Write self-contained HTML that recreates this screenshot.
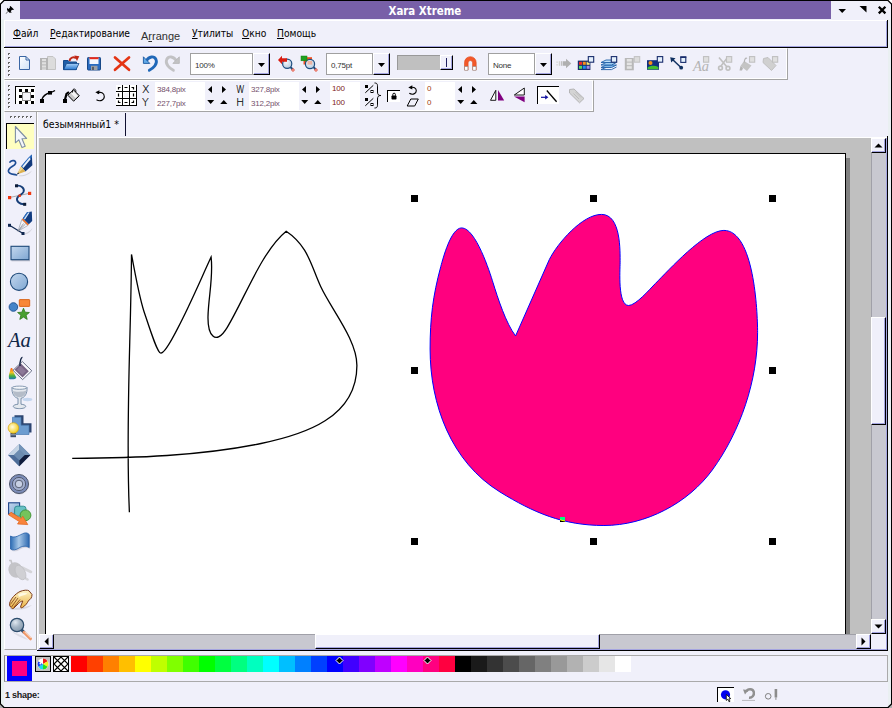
<!DOCTYPE html>
<html><head><meta charset="utf-8"><title>Xara Xtreme</title>
<style>
html,body{margin:0;padding:0;}
body{width:892px;height:708px;overflow:hidden;position:relative;background:#f0f0fa;font-family:"DejaVu Sans","Liberation Sans",sans-serif;font-size:10px;color:#000;}
div,span.p,i,svg.p{position:absolute;box-sizing:border-box;display:block}
#title{left:20px;top:1px;width:811px;height:18px;background:#7860a8;}
#ttext{left:388.5px;top:2px;color:#fff;font-weight:bold;font-family:"DejaVu Sans Condensed","DejaVu Sans",sans-serif;font-size:11.4px;line-height:18px;height:18px;white-space:nowrap}
.mi{top:28px;font-family:"DejaVu Sans Condensed","DejaVu Sans",sans-serif;font-size:10.2px;line-height:12px;white-space:nowrap;}
#cells i{top:656px;width:16px;height:16px;}
.gd{width:2px;height:2px;background:#fff;border-left:1px solid #666;border-top:1px solid #666;}
.cb{background:#fff;border:1px solid #a0a0a0;}
.btn{background:#f0f0fa;border:1px solid;border-color:#fff #000 #000 #fff;box-shadow:inset -1px -1px 0 #a4a4e0}
.tri{width:0;height:0;border:4px solid transparent;border-top:4px solid #000;border-bottom:none}
.ft{font-family:"Liberation Sans",sans-serif;font-size:8px;line-height:10px;white-space:nowrap;letter-spacing:-0.2px}
.lb{font-family:"DejaVu Sans Light","DejaVu Sans",sans-serif;font-weight:200;font-size:11px;line-height:11px;white-space:nowrap;color:#000;-webkit-text-stroke:0.2px #000}
.wf{background:#fff}
.pressed{background:#fff;border-left:1px solid #000;border-top:1px solid #000}
</style></head><body>
<!-- left strip -->
<div style="left:1px;top:19px;width:3px;height:687px;background:#e8f0f0"></div>
<!-- TITLE -->
<div id="title"></div>
<div id="ttext">Xara Xtreme</div>
<!-- MENUBAR -->
<div style="left:4px;top:20px;width:883px;height:27px;border-left:1px solid #fff;border-top:1px solid #fff"></div>
<div class="mi" style="left:13px"><u>Ф</u>айл</div>
<div class="mi" style="left:50px"><u>Р</u>едактирование</div>
<div class="mi" style="left:141px;font-family:'Liberation Sans',sans-serif;top:30px;font-size:11px;color:#303030">A<u>r</u>range</div>
<div class="mi" style="left:192px"><u>У</u>тилиты</div>
<div class="mi" style="left:242px"><u>О</u>кно</div>
<div class="mi" style="left:277px"><u>П</u>омощь</div>
<div style="left:5px;top:46px;width:882px;height:1px;background:#a4a4e0"></div>
<div style="left:4px;top:47px;width:884px;height:1px;background:#000"></div>
<div style="left:886px;top:21px;width:1px;height:26px;background:#a4a4e0"></div>
<div style="left:887px;top:20px;width:1px;height:28px;background:#000"></div>
<!-- TOOLBAR 1 -->
<div style="left:4px;top:48px;width:784px;height:32px;border-right:1px solid #a4a4a4;border-bottom:1px solid #a4a4a4;border-left:1px solid #fff;border-top:1px solid #fff;box-shadow:inset -1px -1px 0 #fff"></div>
<div class="gd" style="left:8px;top:53px"></div><div class="gd" style="left:8px;top:57px"></div><div class="gd" style="left:8px;top:62px"></div><div class="gd" style="left:8px;top:66px"></div><div class="gd" style="left:8px;top:70px"></div><div class="gd" style="left:8px;top:74px"></div>
<div class="cb" style="left:190px;top:53px;width:63px;height:22px"></div><div class="btn" style="left:253px;top:53px;width:17px;height:22px"></div><svg class="p" style="left:258px;top:63px" width="7" height="4"><path d="M0 0H7L3.5 4Z"/></svg><div class="ft" style="left:195px;top:61px;color:#333">100%</div><div class="cb" style="left:326px;top:53px;width:47px;height:22px"></div><div class="btn" style="left:373px;top:53px;width:17px;height:22px"></div><svg class="p" style="left:378px;top:63px" width="7" height="4"><path d="M0 0H7L3.5 4Z"/></svg><div class="ft" style="left:331px;top:61px;color:#333">0,75pt</div><div class="cb" style="left:488px;top:53px;width:47px;height:22px"></div><div class="btn" style="left:535px;top:53px;width:17px;height:22px"></div><svg class="p" style="left:540px;top:63px" width="7" height="4"><path d="M0 0H7L3.5 4Z"/></svg><div class="ft" style="left:493px;top:61px;color:#333">None</div>
<div style="left:397px;top:55px;width:44px;height:15px;background:#c0c0c0;border-top:1px solid #999;border-left:1px solid #999"></div>
<div class="btn" style="left:440px;top:55px;width:13px;height:15px"></div>
<div style="left:446px;top:58px;width:1px;height:9px;background:#202060"></div>
<!-- TOOLBAR 2 -->
<div style="left:4px;top:80px;width:590px;height:32px;border-right:1px solid #a4a4a4;border-bottom:1px solid #a4a4a4;border-left:1px solid #fff;border-top:1px solid #fff;box-shadow:inset -1px -1px 0 #fff"></div>
<div class="gd" style="left:8px;top:85px"></div><div class="gd" style="left:8px;top:89px"></div><div class="gd" style="left:8px;top:94px"></div><div class="gd" style="left:8px;top:98px"></div><div class="gd" style="left:8px;top:102px"></div><div class="gd" style="left:8px;top:106px"></div>
<div class="pressed" style="left:15px;top:86px;width:20px;height:18px"></div>
<div class="wf" style="left:116px;top:85px;width:21px;height:21px"></div>
<div class="lb" style="left:142px;top:84px">X</div>
<div class="lb" style="left:142px;top:97px">Y</div>
<div class="wf" style="left:155px;top:82px;width:50px;height:28px"></div>
<div class="ft" style="left:157px;top:85px;color:#74506c">384,8pix</div>
<div class="ft" style="left:157px;top:99px;color:#74506c">227,7pix</div>
<div class="lb" style="left:235.5px;top:84px;transform:scaleX(0.8);transform-origin:0 0">W</div>
<div class="lb" style="left:236px;top:97px">H</div>
<div class="wf" style="left:249px;top:82px;width:50px;height:28px"></div>
<div class="ft" style="left:251px;top:85px;color:#74506c">327,8pix</div>
<div class="ft" style="left:251px;top:99px;color:#74506c">312,2pix</div>
<div class="wf" style="left:330px;top:82px;width:30px;height:28px"></div>
<div class="ft" style="left:332px;top:84px;color:#801818">100</div>
<div class="ft" style="left:332px;top:98px;color:#801818">100</div>
<div class="pressed" style="left:387px;top:90px;width:13px;height:12px"></div>
<div class="wf" style="left:425px;top:82px;width:30px;height:28px"></div>
<div class="ft" style="left:427px;top:84px;color:#a04010">0</div>
<div class="ft" style="left:427px;top:98px;color:#a04010">0</div>
<div class="pressed" style="left:537px;top:86px;width:22px;height:18px"></div>
<!-- TOOLBOX -->
<div style="left:4px;top:112px;width:33px;height:538px;border-right:1px solid #a8a8a8;border-bottom:1px solid #a8a8a8;border-left:1px solid #fff"></div>
<div class="gd" style="left:10px;top:116px"></div><div class="gd" style="left:14px;top:116px"></div><div class="gd" style="left:18px;top:116px"></div><div class="gd" style="left:22px;top:116px"></div><div class="gd" style="left:26px;top:116px"></div><div class="gd" style="left:30px;top:116px"></div>
<div style="left:6px;top:123px;width:28px;height:26px;background:#ffffc0;border-left:1px solid #000;border-top:1px solid #000"></div>
<!-- TAB -->
<div style="left:37px;top:112px;width:1px;height:538px;background:#fff"></div>
<div style="left:43px;top:118px;font-family:'DejaVu Sans Condensed','DejaVu Sans',sans-serif;font-size:10.4px;line-height:12px;white-space:nowrap">безымянный1 *</div>
<div style="left:125px;top:113px;width:1px;height:23px;background:#101030"></div>
<!-- CANVAS -->
<div style="left:38px;top:137px;width:849px;height:1px;background:#fff"></div>
<div style="left:39px;top:138px;width:832px;height:496px;background:#c0c0c0"></div>
<div style="left:50px;top:158px;width:800px;height:476px;background:#808080"></div>
<div style="left:45px;top:153px;width:801px;height:481px;background:#fff;border:1px solid #000;border-bottom:none"></div>
<!-- SCROLLBARS -->
<div style="left:871px;top:138px;width:15px;height:496px;background:#c8c8d0;border-left:1px solid #a0a0a8"></div>
<div class="btn" style="left:871px;top:138px;width:15px;height:15px"></div>
<div class="btn" style="left:871px;top:619px;width:15px;height:15px"></div>
<div class="btn" style="left:871px;top:317px;width:15px;height:108px"></div>
<div style="left:39px;top:634px;width:832px;height:15px;background:#c8c8d0;border-top:1px solid #a0a0a8"></div>
<div class="btn" style="left:39px;top:634px;width:15px;height:15px"></div>
<div class="btn" style="left:856px;top:634px;width:15px;height:15px"></div>
<div class="btn" style="left:315px;top:634px;width:285px;height:15px"></div>
<div style="left:38px;top:649px;width:849px;height:1px;background:#a4a4e0"></div>
<div style="left:37px;top:650px;width:851px;height:1px;background:#000"></div>
<div style="left:886px;top:138px;width:1px;height:512px;background:#a4a4e0"></div>
<div style="left:887px;top:136px;width:1px;height:515px;background:#000"></div>
<div style="left:888px;top:19px;width:3px;height:687px;background:#eaf0f2"></div>
<!-- COLOUR BAR -->
<div style="left:4px;top:655px;width:884px;height:27px;border:1px solid #aaa;border-left-color:#888"></div>
<div style="left:7px;top:656px;width:25px;height:25px;background:#0000ff"></div>
<div style="left:12px;top:661px;width:15px;height:15px;background:#ff007f"></div>
<div style="left:35px;top:656px;width:16px;height:16px;background:#c0c0c0;border:1px solid #000"></div>
<div style="left:53px;top:656px;width:16px;height:16px;background:#fff;border:1px solid #000"></div>
<div id="cells"><i style="left:71px;background:rgb(255,0,0)"></i><i style="left:87px;background:rgb(255,64,0)"></i><i style="left:103px;background:rgb(255,128,0)"></i><i style="left:119px;background:rgb(255,191,0)"></i><i style="left:135px;background:rgb(255,255,0)"></i><i style="left:151px;background:rgb(191,255,0)"></i><i style="left:167px;background:rgb(128,255,0)"></i><i style="left:183px;background:rgb(64,255,0)"></i><i style="left:199px;background:rgb(0,255,0)"></i><i style="left:215px;background:rgb(0,255,64)"></i><i style="left:231px;background:rgb(0,255,128)"></i><i style="left:247px;background:rgb(0,255,191)"></i><i style="left:263px;background:rgb(0,255,255)"></i><i style="left:279px;background:rgb(0,191,255)"></i><i style="left:295px;background:rgb(0,128,255)"></i><i style="left:311px;background:rgb(0,64,255)"></i><i style="left:327px;background:rgb(0,0,255)"></i><i style="left:343px;background:rgb(64,0,255)"></i><i style="left:359px;background:rgb(128,0,255)"></i><i style="left:375px;background:rgb(191,0,255)"></i><i style="left:391px;background:rgb(255,0,255)"></i><i style="left:407px;background:rgb(255,0,191)"></i><i style="left:423px;background:rgb(255,0,128)"></i><i style="left:439px;background:rgb(255,0,64)"></i><i style="left:455px;background:rgb(0,0,0)"></i><i style="left:471px;background:rgb(26,26,26)"></i><i style="left:487px;background:rgb(51,51,51)"></i><i style="left:503px;background:rgb(76,76,76)"></i><i style="left:519px;background:rgb(102,102,102)"></i><i style="left:535px;background:rgb(128,128,128)"></i><i style="left:551px;background:rgb(153,153,153)"></i><i style="left:567px;background:rgb(178,178,178)"></i><i style="left:583px;background:rgb(204,204,204)"></i><i style="left:599px;background:rgb(230,230,230)"></i><i style="left:615px;background:rgb(255,255,255)"></i></div>
<!-- STATUS -->
<div style="left:5px;top:689px;font-size:9px;font-weight:bold;letter-spacing:-0.25px;line-height:12px;font-family:'Liberation Sans',sans-serif;white-space:nowrap;color:#181818">1 shape:</div>
<div class="pressed" style="left:717px;top:687px;width:17px;height:15px"></div>
<!-- DRAWING + ICONS -->
<svg class="p" style="left:0;top:0" width="892" height="708" viewBox="0 0 892 708">
<path d="M72.2 458.4 C133.4 458.0 200.9 456.0 261.0 443.5 C304.0 434.6 356.9 417.9 356.9 365.4 C356.9 339.7 331.1 309.1 320.8 286.8 C311.0 265.6 308.2 245.9 286.2 231.2 C261.8 251.0 244.1 299.7 227.1 327.6 C215.1 347.3 207.7 334.2 208.0 316.6 C208.3 298.0 213.5 276.6 211.1 257.1 C200.1 280.9 190.1 304.8 177.8 328.1 C172.5 338.5 165 353.2 160.8 353.2 C157.5 353.2 150.5 331 143.9 311.2 C139.5 298 134 268 131.5 254.4 C130.9 340.2 125.4 426.6 129.4 512.3" fill="none" stroke="#000" stroke-width="1.3"/>
<path d="M515.6 335.9 L549.3 259.6 C557.2 243.6 582.2 214.4 601.5 214.4 C621.1 214.4 620.1 250.8 620.1 262.8 C620.1 269.3 617.5 305.5 628.6 305.5 C635.8 305.5 650.3 288.6 655.2 283.7 C669.1 269.8 704.6 230.4 723.9 230.4 C753.9 230.4 757.6 310.7 757.6 332.6 C757.6 380.5 740.4 431.4 712.3 470.0 C688.1 503.2 645.6 525.5 603.9 525.5 C563.3 525.5 533.5 512.6 500.0 492.0 C450.9 461.8 430.1 404.4 430.1 349.0 C430.1 318.6 432.8 296.0 440.8 266.5 C443.0 258.5 450.9 227.9 461.7 227.9 C475.7 227.9 489.9 272.5 493.0 282.6 C497.7 297.8 506.1 323.8 515.6 335.9 Z" fill="#ff007f" stroke="#0000ff" stroke-width="1"/>
<g fill="#000">
<rect x="411" y="195" width="7" height="7"/><rect x="590" y="195" width="7" height="7"/><rect x="769" y="195" width="7" height="7"/>
<rect x="411" y="367" width="7" height="7"/><rect x="769" y="367" width="7" height="7"/>
<rect x="411" y="538" width="7" height="7"/><rect x="590" y="538" width="7" height="7"/><rect x="769" y="538" width="7" height="7"/>
</g>
<clipPath id="mk"><rect x="560" y="517" width="5" height="5"/></clipPath>
<rect x="560" y="517" width="5" height="5" fill="#000"/>
<path clip-path="url(#mk)" d="M515.6 335.9 L549.3 259.6 C557.2 243.6 582.2 214.4 601.5 214.4 C621.1 214.4 620.1 250.8 620.1 262.8 C620.1 269.3 617.5 305.5 628.6 305.5 C635.8 305.5 650.3 288.6 655.2 283.7 C669.1 269.8 704.6 230.4 723.9 230.4 C753.9 230.4 757.6 310.7 757.6 332.6 C757.6 380.5 740.4 431.4 712.3 470.0 C688.1 503.2 645.6 525.5 603.9 525.5 C563.3 525.5 533.5 512.6 500.0 492.0 C450.9 461.8 430.1 404.4 430.1 349.0 C430.1 318.6 432.8 296.0 440.8 266.5 C443.0 258.5 450.9 227.9 461.7 227.9 C475.7 227.9 489.9 272.5 493.0 282.6 C497.7 297.8 506.1 323.8 515.6 335.9 Z" fill="#00ff80" stroke="#ffff00" stroke-width="1"/>
<defs>
<linearGradient id="gPage" x1="0" y1="0" x2="1" y2="1"><stop offset="0" stop-color="#fff"/><stop offset="1" stop-color="#cfe2f6"/></linearGradient>
<linearGradient id="gBlue" x1="0" y1="0" x2="1" y2="1"><stop offset="0" stop-color="#c4d8ee"/><stop offset="1" stop-color="#7ea6d2"/></linearGradient>
<linearGradient id="gFold" x1="0" y1="0" x2="0" y2="1"><stop offset="0" stop-color="#a8d0f8"/><stop offset="1" stop-color="#2878d0"/></linearGradient>
<radialGradient id="gLens" cx="0.4" cy="0.35" r="0.7"><stop offset="0" stop-color="#f4f8fc"/><stop offset="1" stop-color="#b4c8dc"/></radialGradient>
<radialGradient id="gBulb" cx="0.4" cy="0.4" r="0.6"><stop offset="0" stop-color="#fffbe0"/><stop offset="1" stop-color="#f4d020"/></radialGradient>
<linearGradient id="gFlag" x1="0" y1="0" x2="1" y2="0"><stop offset="0" stop-color="#2c6cb4"/><stop offset="0.45" stop-color="#a8c8e8"/><stop offset="1" stop-color="#2c68b0"/></linearGradient>
<linearGradient id="gSpill" x1="0" y1="0" x2="0" y2="1"><stop offset="0" stop-color="#f86020"/><stop offset="0.4" stop-color="#f0c020"/><stop offset="0.7" stop-color="#40b040"/><stop offset="1" stop-color="#2070c0"/></linearGradient>
<linearGradient id="gHand" x1="0" y1="0" x2="0" y2="1"><stop offset="0" stop-color="#fff4c8"/><stop offset="1" stop-color="#e8b040"/></linearGradient>
</defs>
<!-- title icons -->
<path d="M10.5 6 L14 9.5 L13 10 L12 9.7 L10.7 11.2 L11.8 12.5 L9.5 12.7 L8.3 11.5 L6 13.8 L5.7 13.5 L8 11.2 L7 10 L7.2 7.8 L8.5 9 L10 7.5 L9.8 6.5Z" fill="#000"/>
<path d="M838.5 9H846L842.2 13Z M859.5 6H866.5V12.5Z" fill="#000"/>
<path d="M878.8 6.8L885.4 13.4M885.4 6.8L878.8 13.4" stroke="#000" stroke-width="2.3"/>
<!-- TB1: new -->
<path d="M19.5 56.5H26L29.5 60V69.5H19.5Z" fill="url(#gPage)" stroke="#3a66a4"/>
<path d="M26 56.5V60H29.5" fill="none" stroke="#3a66a4"/>
<!-- gray film+page -->
<path d="M47.5 56.5H53L55.5 59V69.5H47.5Z" fill="#dcdcdc" stroke="#c4c4c4"/>
<rect x="40" y="58" width="8" height="12" fill="#b4b4b4"/>
<g fill="#e0e0e0"><rect x="42" y="59" width="4" height="2.2"/><rect x="42" y="62.2" width="4" height="2.2"/><rect x="42" y="65.4" width="4" height="2.2"/><rect x="42" y="68.4" width="4" height="1.4"/></g>
<!-- open -->
<path d="M63.5 60.5H68L69.5 62H76.5V69.5H63.5Z" fill="#1f5ea8" stroke="#174a8a"/>
<path d="M66.5 63.5H79L76 69.7H63.6Z" fill="url(#gFold)" stroke="#174a8a" stroke-width="0.8"/>
<path d="M69.5 61C70 57.5 73.5 56.5 76 58.2" fill="none" stroke="#c02818" stroke-width="2"/>
<path d="M74.3 55.6L79.3 56.2L77 61Z" fill="#c02818"/>
<!-- save -->
<rect x="87.5" y="57.5" width="13" height="12.5" rx="0.8" fill="#2a6cc0" stroke="#184888"/>
<rect x="89.5" y="57.5" width="9" height="6.5" fill="#f4f8ff"/>
<rect x="89.5" y="57.2" width="9" height="2" fill="#e82818"/>
<rect x="91" y="65.8" width="6.5" height="4.2" fill="#9aa0a8"/><rect x="92" y="66.8" width="2" height="3.2" fill="#585e68"/>
<!-- X -->
<path d="M115 57.5L129 69.8M129 57.5L115 69.8" stroke="#e43414" stroke-width="2.7" stroke-linecap="round"/>
<!-- undo -->
<path d="M146.5 60.5C149 56.5 154 55.5 156 59.5C158 64 153 68.5 149.3 70.3" fill="none" stroke="#2068b8" stroke-width="2.8" stroke-linecap="round"/>
<path d="M143.4 56.8V63.4H149.8Z" fill="#62aae8" stroke="#1a58a0" stroke-width="0.9"/>
<!-- redo -->
<path d="M176.2 60.5C173.7 56.5 168.7 55.5 166.7 59.5C164.7 64 169.7 68.5 173.4 70.3" fill="none" stroke="#c2c2c4" stroke-width="2.8" stroke-linecap="round"/>
<path d="M179.3 56.8V63.4H172.9Z" fill="#c2c2c4" stroke="#b8b8ba" stroke-width="0.9"/>
<!-- zoom prev -->
<path d="M290.5 67L293 69.8" stroke="#1e4e80" stroke-width="2"/><circle cx="293" cy="70" r="1.2" fill="#fff" stroke="#e03820" stroke-width="0.9"/>
<circle cx="287.2" cy="63.8" r="4.6" fill="url(#gLens)" stroke="#1e4e80" stroke-width="1.2"/>
<path d="M278 60L282 55.8V58.2H287V61.8H282V64.2Z" fill="#d81c10"/>
<!-- zoom drawing -->
<rect x="303.5" y="57.2" width="8.5" height="7.3" fill="#f05020"/>
<path d="M313.5 67L316 69.8" stroke="#1e4e80" stroke-width="2"/><circle cx="316" cy="70" r="1.2" fill="#fff" stroke="#e03820" stroke-width="0.9"/>
<circle cx="310" cy="64" r="4.6" fill="url(#gLens)" stroke="#1e4e80" stroke-width="1.2"/>
<rect x="307.5" y="61" width="4.7" height="3.6" fill="#f0a088" opacity="0.75"/>
<rect x="301" y="56" width="6" height="4.8" fill="#20a020" stroke="#108010" stroke-width="0.5"/>
<!-- magnet -->
<path d="M464.5 70V62.5A5.8 5.8 0 0 1 476.2 62.5V70H472.6V62.8A2.2 2.2 0 0 0 468.1 62.8V70Z" fill="#f2582a" stroke="#e04818" stroke-width="0.6"/>
<rect x="464.7" y="66.6" width="3.2" height="3.6" fill="#fff" stroke="#909090" stroke-width="0.6"/><rect x="472.8" y="66.6" width="3.2" height="3.6" fill="#fff" stroke="#909090" stroke-width="0.6"/>
<!-- gray arrow -->
<path d="M563 61.2H566V58.8L571.3 63.5L566 68.2V65.8H563Z" fill="#b0b0b0"/>
<g fill="#dcdcdc"><rect x="556.3" y="61.4" width="1.6" height="1.6"/><rect x="556.3" y="64" width="1.6" height="1.6"/><rect x="558.8" y="61.2" width="1.5" height="4.6" fill="#d0d0d0"/><rect x="561" y="61.2" width="1.5" height="4.6" fill="#c0c0c0"/></g>
<!-- colour gallery -->
<rect x="577.8" y="60.6" width="12.6" height="9.4" fill="#182c6c"/>
<rect x="579" y="61.8" width="3" height="3" fill="#f02828"/><rect x="582.8" y="61.8" width="3" height="3" fill="#f89018"/><rect x="586.6" y="61.8" width="3" height="3" fill="#f8e878"/>
<rect x="579" y="65.8" width="3" height="3" fill="#58d858"/><rect x="582.8" y="65.8" width="3" height="3" fill="#1890f0"/><rect x="586.6" y="65.8" width="3" height="3" fill="#a088e8"/>
<rect x="588.3" y="56.6" width="5.4" height="5.6" fill="#e4f0fc" stroke="#182c6c" stroke-width="1.1"/>
<!-- layer gallery -->
<g stroke="#2060a8" stroke-width="0.9"><path d="M601 67.5L606 65H616.5L611.5 67.5Z" fill="#80b8e8"/><path d="M601 65L606 62.5H616.5L611.5 65Z" fill="#a0ccf0"/><path d="M601 62.5L606 60H616.5L611.5 62.5Z" fill="#c0e0f8"/><path d="M601 69.5L606 67.5" fill="none"/></g>
<path d="M601 69.6H611.5L616.5 67" fill="none" stroke="#2060a8" stroke-width="0.9"/>
<rect x="611.3" y="56.6" width="5.4" height="5.6" fill="#e4f0fc" stroke="#182c6c" stroke-width="1.1"/>
<!-- frame gallery gray -->
<rect x="624.8" y="58" width="9" height="12.3" fill="#b8b8b8"/>
<g fill="#e4e4e4"><rect x="626.8" y="59" width="5" height="2.6"/><rect x="626.8" y="62.6" width="5" height="2.6"/><rect x="626.8" y="66.2" width="5" height="2.6"/></g>
<rect x="634.3" y="56.6" width="5.4" height="5.6" fill="#dcdcdc" stroke="#c4c4c4" stroke-width="1.1"/>
<!-- bitmap gallery -->
<rect x="647" y="60.2" width="12" height="9.6" fill="#103080"/>
<circle cx="650.5" cy="63" r="2" fill="#f89018"/>
<path d="M647.6 69.3V67.5C650 65.5 655 65.3 658.4 67V69.3Z" fill="#40c030"/>
<rect x="657.3" y="56.6" width="5.4" height="5.6" fill="#e4f0fc" stroke="#182c6c" stroke-width="1.1"/>
<!-- line gallery -->
<path d="M672 59L681 67.5" stroke="#103060" stroke-width="1.5"/><circle cx="681.2" cy="67.7" r="1.9" fill="#103060"/>
<path d="M670.2 57.2L675.5 58.2L671.2 62.5Z" fill="#103060"/>
<rect x="680.8" y="57" width="5" height="5.4" fill="#e4f0fc" stroke="#182c6c" stroke-width="1.1"/><rect x="680.3" y="56.4" width="6" height="1.6" fill="#182c6c"/>
<!-- font gallery gray -->
<text x="693" y="70.5" font-family="Liberation Serif,serif" font-style="italic" font-size="14.5" fill="#b4b4b4">Aa</text>
<rect x="703.5" y="56.6" width="5.2" height="5.6" fill="#e0e0e0" stroke="#c0c0c0" stroke-width="1.1"/>
<!-- clipart gallery gray (scissors) -->
<g stroke="#c0c0c0" fill="none" stroke-width="1.6"><path d="M719 57.5L727 67M727.5 57.5L721 66"/><circle cx="720.5" cy="68" r="1.9"/><circle cx="728" cy="68.3" r="1.9"/></g>
<rect x="726.5" y="56.6" width="5.2" height="5.6" fill="#e0e0e0" stroke="#c0c0c0" stroke-width="1.1"/>
<!-- fill gallery gray (bucket) -->
<path d="M744 61L751.5 65.5L747 71L740.5 66Z" fill="#c4c4c4"/><path d="M740.5 66L739.5 70.5H742L743 68Z" fill="#b4b4b4"/><path d="M744.5 62.5C744 59 746 57.5 747 58.5" stroke="#b4b4b4" fill="none" stroke-width="1.2"/>
<rect x="749.5" y="56.6" width="5.2" height="5.6" fill="#e0e0e0" stroke="#c0c0c0" stroke-width="1.1"/>
<!-- name gallery gray (tag) -->
<path d="M763.5 58.5L768 57.5L776 65.5L771.5 70.5L763 62.5Z" fill="#d0d0d0" stroke="#bcbcbc" stroke-width="0.9"/>
<rect x="772.5" y="56.6" width="5.2" height="5.6" fill="#e0e0e0" stroke="#c0c0c0" stroke-width="1.1"/>
<!-- ===== TB2 ===== -->
<!-- bounds handles button -->
<g fill="#000"><rect x="19" y="89" width="3" height="3"/><rect x="25" y="89" width="3" height="3"/><rect x="31" y="89" width="3" height="3"/>
<rect x="19" y="95" width="3" height="3"/><rect x="31" y="95" width="3" height="3"/>
<rect x="19" y="101" width="3" height="3"/><rect x="25" y="101" width="3" height="3"/><rect x="31" y="101" width="3" height="3"/></g>
<rect x="22.5" y="92.5" width="8" height="8" fill="#f4f4f8" stroke="#888" stroke-width="1"/>
<!-- object handles -->
<rect x="40" y="99" width="4" height="4" fill="#000"/><rect x="48" y="91" width="4" height="3.6" fill="#000"/>
<path d="M42 99C43.5 96 46 93.8 49 93C51.5 92.3 53.5 91.6 55 90.5" fill="none" stroke="#000" stroke-width="1.4"/>
<!-- fill handles -->
<rect x="63" y="99" width="4" height="4" fill="#000"/>
<path d="M65 99.5L66.5 94L69 92" fill="none" stroke="#000" stroke-width="2.2"/>
<path d="M73.5 89.8L79.3 95.8L73.6 101.2L67.8 95.2Z" fill="#c8c8c8" stroke="#000" stroke-width="1"/>
<path d="M73.5 91.2L77.8 95.7L75.5 98L71 93.5Z" fill="#fff" opacity="0.8"/>
<path d="M72.5 92.5C71.5 88.5 76.5 87.5 75.8 92" fill="none" stroke="#000" stroke-width="0.9"/>
<!-- rotate -->
<path d="M97.5 93.2C100.5 91.2 104.3 93 104.3 96.6C104.3 100.2 100 102 96.5 99.8" fill="none" stroke="#000" stroke-width="1.1"/>
<path d="M95.3 92.2L99.5 90.2L99 94.2Z" fill="#000"/>
<!-- grid icon -->
<g stroke="#000" stroke-width="1" fill="none">
<path d="M116 91.5H137M116 98.5H137M116 105.5H137M122.5 85V106M129.5 85V106M136.5 85V106"/>
<path d="M118.5 89.5V87.5H120.5M124.5 87.5H127.5M131.5 87.5H133.5V89.5M118.5 93.5V96.5M133.5 93.5V96.5M118.5 100.5V102.5H120.5M124.5 102.5H127.5M131.5 102.5H133.5V100.5" stroke-width="1.2"/>
</g>
<rect x="124" y="93" width="4.5" height="4.5" fill="#f0f0f4"/>
<!-- nudge arrows -->
<g fill="#000">
<path d="M212 86V93L208 89.5Z M222 86V93L226 89.5Z M207.2 100H214.2L210.7 104Z M220.2 104H227.4L223.8 100Z"/>
<path d="M306 86V93L302 89.5Z M316 86V93L320 89.5Z M301.2 100H308.2L304.7 104Z M314.2 104H321.4L317.8 100Z"/>
<path d="M462 86V93L458 89.5Z M472 86V93L476 89.5Z M457.2 100H464.2L460.7 104Z M470.2 104H477.4L473.8 100Z"/>
</g>
<!-- percent + brace -->
<g stroke="#000" stroke-width="1" fill="none">
<path d="M373.3 85.3L365.3 92.8M373.3 98.3L365.3 105.8"/>
<rect x="365.5" y="85.5" width="2" height="2" fill="#000"/><rect x="371" y="90.5" width="2" height="2"/>
<rect x="365.5" y="98.5" width="2" height="2" fill="#000"/><rect x="371" y="103.5" width="2" height="2"/>
<path d="M374.5 83C377.5 83 377.5 84.5 377.5 87V92C377.5 94.5 378.5 95.5 380.8 95.5C378.5 95.5 377.5 96.5 377.5 99V104C377.5 106.5 377.5 108 374.5 108"/>
</g>
<!-- lock -->
<rect x="391.5" y="95.5" width="5" height="4" rx="0.8" fill="#000"/><path d="M392.8 95.8V94.5A1.3 1.3 0 0 1 395.4 94.5V95.8" fill="none" stroke="#000" stroke-width="1"/>
<!-- rotate small -->
<path d="M410.5 87.8C413.5 86.3 416.3 88 416.3 90.8C416.3 93.8 412.5 95.2 409.3 93.3" fill="none" stroke="#000" stroke-width="1.1"/>
<path d="M408.3 87.6L412.3 85.2V89.6Z" fill="#000"/>
<!-- skew -->
<path d="M410.8 99H418.3L414.7 106H407.2Z" fill="none" stroke="#000" stroke-width="1"/>
<!-- flip h -->
<path d="M495.8 90.3V100.3H490.5Z" fill="#fff" stroke="#000" stroke-width="0.9"/><path d="M498 90V100.5H504.2Z" fill="#800080"/>
<!-- flip v -->
<path d="M524.3 88V95H514.3Z" fill="#fff" stroke="#000" stroke-width="0.9"/><path d="M524.6 96.5V102.2L514 96.5Z" fill="#800080"/>
<!-- scale line widths button -->
<path d="M546.8 90.5L556.6 101.8" stroke="#000" stroke-width="1.3"/>
<path d="M541 97.3H546" stroke="#1010a0" stroke-width="1.2"/><path d="M545.2 95L548.4 97.3L545.2 99.6Z" fill="#1010a0"/>
<!-- tag gray -->
<path d="M569.5 89.5L574 89L584 98.5L579.5 102.8L569.5 93Z" fill="#d4d4d4" stroke="#b0b0b0" stroke-width="0.9"/>
<path d="M573.5 93.5L579 99M575.5 92L581 97.5" stroke="#b8b8b8" stroke-width="0.8"/>
<!-- ===== STATUS ===== -->
<circle cx="725.5" cy="694.8" r="4.6" fill="#0000f0"/>
<path d="M726.3 694.5V700.5L727.8 699.2L729 701.8L730 701.3L728.9 698.8L730.8 698.6Z" fill="#fff" stroke="#000" stroke-width="0.8"/>
<path d="M746.5 691.5C747.5 688.5 753 688.3 753.8 692C754.5 695.5 752 698 749 697.8" fill="none" stroke="#909090" stroke-width="2.5"/>
<path d="M743 689.5L748.5 690L745 694.5Z" fill="#909090"/>
<path d="M742.5 700.4H755" stroke="#808080" stroke-width="1" stroke-dasharray="1 1"/>
<circle cx="768.2" cy="696.3" r="2.8" fill="none" stroke="#808080" stroke-width="1"/>
<rect x="774.6" y="689" width="2.6" height="8.5" fill="#8c8c8c"/><rect x="775.4" y="697.5" width="1" height="2.4" fill="#8c8c8c"/>
<!-- scrollbar arrows -->
<path d="M874.5 147.5H882.5L878.5 143.5Z M874.5 624.5H882.5L878.5 628.5Z M48.5 637.5V645.5L44.5 641.5Z M861.5 637.5V645.5L865.5 641.5Z" fill="#000"/>
<!-- colour markers -->
<g fill="#000" stroke="#fff" stroke-width="1"><path d="M339.5 657L343 660.5L339.5 664L336 660.5Z M427.5 657L431 660.5L427.5 664L424 660.5Z"/></g>
<!-- colour wheel -->
<g transform="translate(43 664)"><circle r="5.6" fill="#fff"/>
<path d="M0 0L0-5.4A5.4 5.4 0 0 1 4.7-2.7Z" fill="#f01818"/><path d="M0 0L4.7-2.7A5.4 5.4 0 0 1 4.7 2.7Z" fill="#f0f020"/><path d="M0 0L4.7 2.7A5.4 5.4 0 0 1 0 5.4Z" fill="#20e020"/>
<path d="M0 0L0 5.4A5.4 5.4 0 0 1-4.7 2.7Z" fill="#18d8f0"/><path d="M0 0L-4.7 2.7A5.4 5.4 0 0 1-4.7-2.7Z" fill="#1840f0"/><path d="M0 0L-4.7-2.7A5.4 5.4 0 0 1 0-5.4Z" fill="#fff"/><circle cx="-2.6" cy="-0.5" r="1" fill="#fff"/></g>
<!-- no colour -->
<path d="M54 657L68 671M68 657L54 671M54 664L61 657L68 664L61 671Z" fill="none" stroke="#000" stroke-width="1.1"/>
<!-- ===== TOOLBOX ===== -->
<!-- selector arrow -->
<path d="M15.4 126.5V142.8L18.8 139.8L22 147.6L25.2 146.3L22 138.8L26.6 138.5Z" fill="#f4f6fa" stroke="#7e8ea4" stroke-width="1.1" stroke-linejoin="round"/>
<!-- freehand -->
<path d="M10 162C12 159.5 16.5 160.5 15.5 163.5C14.5 166.5 7.5 167.5 8.5 171.5C9.5 174.5 13 174 16.5 175" fill="none" stroke="#1c4c94" stroke-width="1.7" stroke-linecap="round"/>
<path d="M19 175.5C24 175.5 29 173.5 32 170.5C30 174.5 24 176.8 19 176.3Z" fill="#c4c4cc" opacity="0.7"/>
<path d="M31.8 154.4L32.4 165.2L25.4 171.6L21 166.5Z" fill="#123a7c"/>
<path d="M31.8 154.4L28 158L21 166.5L22.6 168.4L31.9 157Z" fill="#2a6cc0"/><path d="M29.6 157.6L22.3 166.6L23.4 168L30.6 159.2Z" fill="#fff" opacity="0.9"/>
<path d="M21 166.5L25.4 171.6L16.8 174.4Z" fill="#dcb050"/><path d="M21 166.5L23 168.8L17.5 173.8Z" fill="#f0d890"/><path d="M18.2 172.6L19.2 173.7L16.6 174.6Z" fill="#203050"/>
<!-- shape editor -->
<path d="M9.5 197.5L29.5 193.3" stroke="#888" stroke-width="0.7"/>
<path d="M16.5 185.8C21 185 25 188.5 23.5 192C22.5 194.5 19 195 17.5 197.5C15.5 201 19.5 204.5 24.5 204.3" fill="none" stroke="#163e78" stroke-width="1.9"/>
<rect x="15" y="184.3" width="3" height="3" fill="#0c1c38"/><rect x="23.2" y="202.8" width="3" height="3" fill="#0c1c38"/>
<rect x="8" y="196" width="3.2" height="3.2" fill="#f03810"/><rect x="28" y="191.8" width="3.2" height="3.2" fill="#f03810"/><rect x="18.5" y="194.5" width="2.4" height="2.4" fill="#f03810"/>
<!-- pen -->
<path d="M22 234C26 233.5 30.5 231 32.5 228C31 232.5 26 235.2 22 234.8Z" fill="#c0c0c8" opacity="0.6"/>
<path d="M9.5 225.3L23 233.5" stroke="#102850" stroke-width="1.2"/>
<rect x="8" y="223.8" width="3" height="3" fill="#102850"/><rect x="21.5" y="232" width="3" height="3" fill="#102850"/>
<path d="M21.8 219.5L27.8 225.5L18 231.3Z" fill="#f4f4f8" stroke="#8890a0" stroke-width="0.6"/><path d="M18 231.3L23.5 223.5M18 231.3L25.5 224" stroke="#606878" stroke-width="0.6"/>
<path d="M22.8 218.3L28.8 224.3L27.8 225.5L21.8 219.5Z" fill="#f07020"/>
<path d="M27 212.3L31.8 211.6L32.2 221L28.8 224.3L22.8 218.3Z" fill="#123c80"/>
<path d="M27 212.3L29.5 212L24.6 220L22.8 218.3Z" fill="#2a6cc0"/><path d="M28.3 212.6L29.6 212.5L25 219.6L24 218.8Z" fill="#fff" opacity="0.85"/>
<!-- rectangle -->
<rect x="11.5" y="260" width="18.5" height="1.3" fill="#c4c4d0"/>
<rect x="11" y="246.3" width="18" height="13.4" fill="url(#gBlue)" stroke="#1c4878" stroke-width="1.1"/>
<!-- ellipse -->
<circle cx="19.6" cy="282.6" r="8.7" fill="#c8c8d4" opacity="0.7"/>
<circle cx="19" cy="281.8" r="8.6" fill="url(#gBlue)" stroke="#1c4878" stroke-width="1.1"/>
<!-- quickshape -->
<rect x="19.3" y="299.6" width="10.4" height="6.8" rx="0.6" fill="#f88838" stroke="#d86010" stroke-width="0.9"/>
<circle cx="13.4" cy="307" r="4.3" fill="#4484c8" stroke="#1c5090" stroke-width="0.9"/>
<path d="M23.5 308.2L25.1 312.2L29.4 312.5L26.1 315.2L27.2 319.4L23.5 317.1L19.8 319.4L20.9 315.2L17.6 312.5L21.9 312.2Z" fill="#48a030" stroke="#2c7818" stroke-width="0.8"/>
<!-- text -->
<text x="8" y="346.6" font-family="Liberation Serif,serif" font-style="italic" font-size="20.5" fill="#102848">Aa</text>
<!-- fill tool -->
<path d="M9 378.5C8.5 374 10 372.5 10.3 369.5C10.5 367.5 12.5 367.5 12.8 369.5C13.2 372.5 15 374.5 16.3 377.5C16.6 379.5 9.3 380 9 378.5Z" fill="url(#gSpill)"/>
<path d="M22.3 361.5L31.8 370.8L22.6 379.6L13 370.3Z" fill="#f8f8fc" stroke="#586078" stroke-width="0.9"/>
<path d="M21 363.5L28.8 371.2L22.5 377.5L14.5 369.8Z" fill="#786484"/><path d="M20.5 366L26 371.3L22.3 375L17 369.7Z" fill="#8c7898"/>
<path d="M20 366C19.5 361 21.5 357 22.5 357.5" fill="none" stroke="#102040" stroke-width="1.3"/>
<!-- transparency glass -->
<ellipse cx="27.5" cy="399.5" rx="4.8" ry="1.7" fill="#b8d0ec" opacity="0.8"/>
<path d="M12 387.5C11.5 393 14 397.5 18 398.3V404.2C15.5 404.5 13.3 405.2 13.3 406.3C13.3 407.8 16 408.6 19.5 408.6C23 408.6 25.7 407.8 25.7 406.3C25.7 405.2 23.5 404.5 21 404.2V398.3C25 397.5 27.5 393 27 387.5Z" fill="#e4e8ee" stroke="#6c84a0" stroke-width="0.9"/>
<ellipse cx="19.5" cy="387.7" rx="7.5" ry="1.6" fill="#f4f6fa" stroke="#6c84a0" stroke-width="0.8"/>
<path d="M13 391C15 392 24 392 26.3 390.5C26 394.5 23.5 397 19.5 397.3C15.5 397 13.3 394.5 13 391Z" fill="#b4bcc8"/>
<!-- shadow tool -->
<path d="M14.5 415.2H23.5V423.2H31.5V432.5H14.5Z" fill="#2c4470"/>
<path d="M12.5 417.2H21V425.2H29V434.5H12.5Z" fill="#6c9cd0" stroke="#4878b0" stroke-width="0.7"/>
<rect x="10.5" y="433" width="5.5" height="4.2" fill="#3c4c68"/><rect x="10.5" y="434.3" width="5.5" height="1" fill="#a0a8b8"/>
<circle cx="13.4" cy="428" r="5.3" fill="url(#gBulb)" stroke="#d8a810" stroke-width="0.7"/>
<!-- bevel -->
<path d="M19.3 444L30.4 455L19.3 466.2L8.2 455Z" fill="#5c7ca4"/>
<path d="M19.3 444L8.2 455L14 455L19.3 449.8Z" fill="#c4d4e4"/><path d="M19.3 444L30.4 455L24.6 455L19.3 449.8Z" fill="#7494b8"/>
<path d="M8.2 455L19.3 466.2L19.3 460.3L14 455Z" fill="#4c6c98"/><path d="M30.4 455L19.3 466.2L19.3 460.3L24.6 455Z" fill="#101c3c"/>
<path d="M19.3 449.8L24.6 455L19.3 460.3L14 455Z" fill="#6c8cb0"/>
<!-- contour -->
<circle cx="19.6" cy="484.8" r="9.6" fill="#c4c4d0" opacity="0.7"/>
<circle cx="19" cy="484" r="9.5" fill="#7c8cb8" stroke="#4c5468" stroke-width="1"/>
<circle cx="19" cy="484" r="6.6" fill="#a4b0d0" stroke="#4c5468" stroke-width="0.9"/>
<circle cx="19" cy="484" r="3.8" fill="#c8d0e4" stroke="#4c5468" stroke-width="0.9"/>
<!-- blend -->
<rect x="8.6" y="502.8" width="11" height="11.4" fill="url(#gBlue)" stroke="#1c4488" stroke-width="1.1"/>
<rect x="14.6" y="506.2" width="11.4" height="10" rx="2.5" fill="#68c0c4" stroke="#288890" stroke-width="0.9"/>
<circle cx="25.5" cy="515.3" r="5.4" fill="#74c45c" stroke="#3c9030" stroke-width="0.9"/>
<path d="M8.5 514.8L11 512.2L21 518.5L22.8 516.2L27.8 524.6L17.5 524L19.2 521.5Z" fill="#f8843c" stroke="#e06018" stroke-width="0.7"/>
<!-- mould -->
<path d="M11.5 537C16 540 21 535.5 25 534.2C27 533.5 29 534 30.2 535.5V549C27 547 23 547.5 20 549.5C17 551.5 14 552 11.5 550.5Z" fill="#c0c0cc" opacity="0.6"/>
<path d="M10.5 536C15 539 20 534.5 24 533.2C26 532.5 28 533 29.2 534.5V547.5C26 545.5 22 546 19 548C16 550 13 550.5 10.5 549Z" fill="url(#gFlag)" stroke="#2460a8" stroke-width="0.8"/>
<!-- plug gray -->
<path d="M9 560.5L11 560.5L12 564" fill="none" stroke="#c4c4c8" stroke-width="1.6"/>
<path d="M22 567.5L31 572M19 574.5L27.5 579.5" stroke="#d4d4d8" stroke-width="2.6" stroke-linecap="round"/>
<ellipse cx="15.5" cy="570" rx="7" ry="7.8" transform="rotate(-28 15.5 570)" fill="#c4c4c8"/>
<ellipse cx="20.5" cy="572.5" rx="4.6" ry="7.8" transform="rotate(-28 20.5 572.5)" fill="#d0d0d4" stroke="#bcbcc0" stroke-width="0.6"/>
<!-- push hand -->
<path d="M10 607C13 609.5 30 606 32 605C28 609.5 14 611 10 609Z" fill="#c0c0c8" opacity="0.5"/>
<path d="M9.5 603.5C11 598.5 15 594 20 591.5C23.5 590 27.5 589.8 29 590.8L32 594.5C32 597.5 30.5 599.5 28.5 600.5C27.5 603 25.5 605.5 22.5 607.5C21 608.3 20.2 607.5 20.8 606L22.8 601C21.5 601 20 602 18.5 603.5L14 608C13 609 11.8 608.6 11.5 607.8C10.3 607 9.2 605.3 9.5 603.5Z" fill="url(#gHand)" stroke="#7c3c1c" stroke-width="1"/>
<path d="M11.5 607L18 598M13.8 607.5L20 599.5M10.3 604.5L16 597" stroke="#7c3c1c" stroke-width="0.8" fill="none"/>
<path d="M18 594.5C21 592.5 25 592 27.5 593.5C26 595 22 595.5 19 597Z" fill="#fffbe8" opacity="0.9"/>
<!-- zoom tool -->
<path d="M12 631C16 634 24 635 28 640C22 638 14 635 12 631Z" fill="#c0c0c8" opacity="0.4"/>
<path d="M21.5 629.8L24.3 632.6" stroke="#2c4c6c" stroke-width="3"/>
<path d="M24 632.3L30.5 638.8" stroke="#f09868" stroke-width="3" stroke-linecap="round"/><path d="M24.6 631.8L30.8 638" stroke="#fce4d4" stroke-width="0.9"/>
<circle cx="17" cy="625" r="6.7" fill="url(#gLens2)" stroke="#2c4c6c" stroke-width="1.2"/>
<defs><radialGradient id="gLens2" cx="0.38" cy="0.3" r="0.75"><stop offset="0" stop-color="#e0e8f0"/><stop offset="0.5" stop-color="#a4b4c4"/><stop offset="1" stop-color="#8498ac"/></radialGradient></defs>

</svg>
<!-- WINDOW BORDER -->
<div style="left:0;top:0;width:892px;height:708px;border:1px solid #000;"></div>
<svg class="p" style="left:0;top:0" width="892" height="708" viewBox="0 0 892 708">
<path d="M0 0H4L0 4Z" fill="#fff"/><path d="M4 0.5L0.5 4" stroke="#000" stroke-width="1.2"/>
<path d="M892 0H888L892 4Z" fill="#fff"/><path d="M888 0.5L891.5 4" stroke="#000" stroke-width="1.2"/>
<path d="M0 708H4L0 704Z" fill="#b0b0b0"/><path d="M4 707.5L0.5 704" stroke="#000" stroke-width="1.2"/>
<path d="M892 708H888L892 704Z" fill="#b0b0b0"/><path d="M888 707.5L891.5 704" stroke="#000" stroke-width="1.2"/>
</svg>
</body></html>
